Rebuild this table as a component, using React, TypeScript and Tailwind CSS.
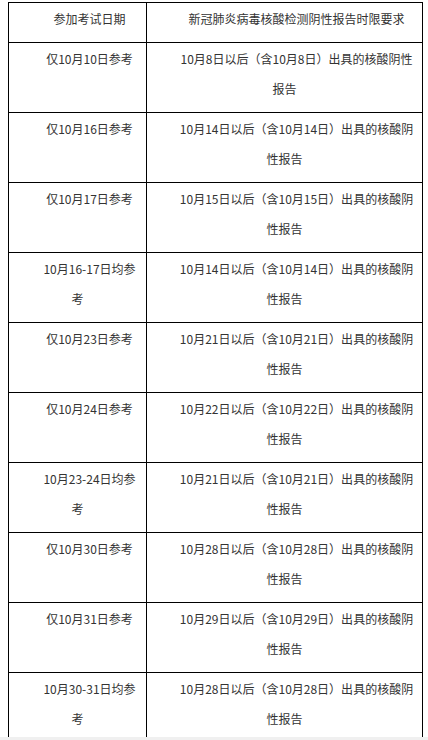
import React from "react";

const rows: [string, string][] = [
  ["仅10月10日参考", "10月8日以后（含10月8日）出具的核酸阴性报告"],
  ["仅10月16日参考", "10月14日以后（含10月14日）出具的核酸阴性报告"],
  ["仅10月17日参考", "10月15日以后（含10月15日）出具的核酸阴性报告"],
  ["10月16-17日均参考", "10月14日以后（含10月14日）出具的核酸阴性报告"],
  ["仅10月23日参考", "10月21日以后（含10月21日）出具的核酸阴性报告"],
  ["仅10月24日参考", "10月22日以后（含10月22日）出具的核酸阴性报告"],
  ["10月23-24日均参考", "10月21日以后（含10月21日）出具的核酸阴性报告"],
  ["仅10月30日参考", "10月28日以后（含10月28日）出具的核酸阴性报告"],
  ["仅10月31日参考", "10月29日以后（含10月29日）出具的核酸阴性报告"],
  ["10月30-31日均参考", "10月28日以后（含10月28日）出具的核酸阴性报告"],
];

function Cell({ children }: { children: React.ReactNode }) {
  return (
    <div className="border-r border-b border-black px-[8px] pt-[1px] pb-[8px]">
      <p className="indent-[24px] text-center leading-[30px]">{children}</p>
    </div>
  );
}

export default function App() {
  return (
    <div
      className="flex h-[740px] w-[428px] flex-col overflow-hidden bg-white text-[12px] text-[#333333]"
      style={{ fontFamily: '"Noto Sans CJK SC", "Noto Sans", sans-serif' }}
    >
      <div className="h-[737px] overflow-hidden pt-[2px] pl-[8px]">
        <div className="grid w-[415px] grid-cols-[138px_276px] border-t border-l border-black">
          <Cell>参加考试日期</Cell>
          <Cell>新冠肺炎病毒核酸检测阴性报告时限要求</Cell>
          {rows.map(([a, b], i) => (
            <React.Fragment key={i}>
              <Cell>{a}</Cell>
              <Cell>{b}</Cell>
            </React.Fragment>
          ))}
        </div>
      </div>
      <div className="h-[3px] bg-[#f0f0f0]" />
    </div>
  );
}
